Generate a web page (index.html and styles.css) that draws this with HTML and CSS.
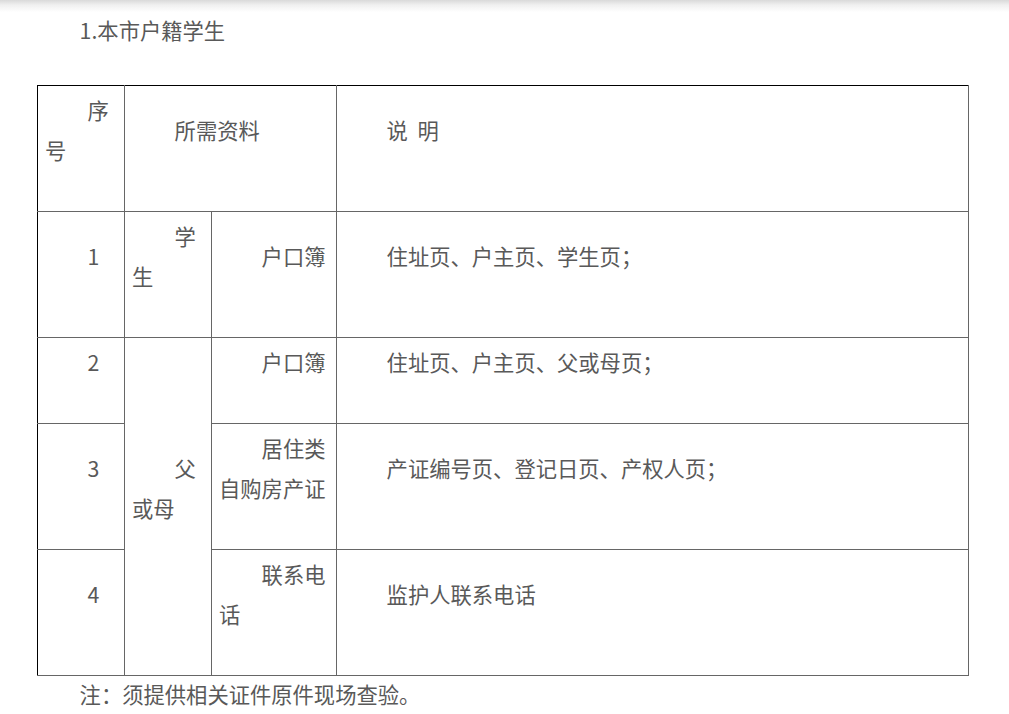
FILE: index.html
```html
<!DOCTYPE html>
<html lang="zh-CN">
<head>
<meta charset="utf-8">
<title>本市户籍学生</title>
<link rel="stylesheet" href="styles.css">
</head>
<body>
<div class="top-shadow"></div>
<div class="article">
  <p class="para heading">1.本市户籍学生</p>
  <table class="doc-table">
    <colgroup>
      <col class="c1"><col class="c2"><col class="c3"><col class="c4">
    </colgroup>
    <tr>
      <td class="first-col top-row">序号</td>
      <td class="top-row" colspan="2">所需资料</td>
      <td class="top-row">说&nbsp;&nbsp;明</td>
    </tr>
    <tr>
      <td class="first-col">1</td>
      <td>学生</td>
      <td>户口簿</td>
      <td>住址页、户主页、学生页；</td>
    </tr>
    <tr>
      <td class="first-col">2</td>
      <td rowspan="3">父或母</td>
      <td>户口簿</td>
      <td>住址页、户主页、父或母页；</td>
    </tr>
    <tr>
      <td class="first-col">3</td>
      <td>居住类自购房产证</td>
      <td>产证编号页、登记日页、产权人页；</td>
    </tr>
    <tr>
      <td class="first-col">4</td>
      <td>联系电话</td>
      <td>监护人联系电话</td>
    </tr>
  </table>
  <p class="para note">注：须提供相关证件原件现场查验。</p>
</div>
</body>
</html>
```

FILE: styles.css
```css
html, body {
  margin: 0;
  padding: 0;
  background: #fff;
}

body {
  font-family: "Noto Sans CJK SC", "Noto Sans", sans-serif;
  font-size: 21.3px;
  color: #595959;
}

.top-shadow {
  position: fixed;
  top: 0;
  left: 0;
  right: 0;
  height: 12px;
  background: linear-gradient(to bottom, #d9d9d9 0%, #efefef 40%, rgba(255,255,255,0) 100%);
  pointer-events: none;
}

.article {
  padding: 10px 0 0 37px;
}

.para {
  margin: 0;
  line-height: 40px;
  text-indent: 2em;
}

.heading {
  margin-bottom: 35px;
}

.note {
  margin-top: -2px;
}

.doc-table {
  border-collapse: collapse;
  table-layout: fixed;
  width: 931px;
}

.c1 { width: 87px; }
.c2 { width: 87px; }
.c3 { width: 125px; }
.c4 { width: 632px; }

.doc-table td {
  border: 1px solid #666;
  padding: 4px 7px 41px 7px;
  vertical-align: middle;
  line-height: 40px;
  text-indent: 2em;
  text-align: left;
  word-break: break-all;
}

.doc-table td.first-col {
  border-left: 1px solid #000;
}

.doc-table td.top-row {
  border-top: 1px solid #000;
}
```
